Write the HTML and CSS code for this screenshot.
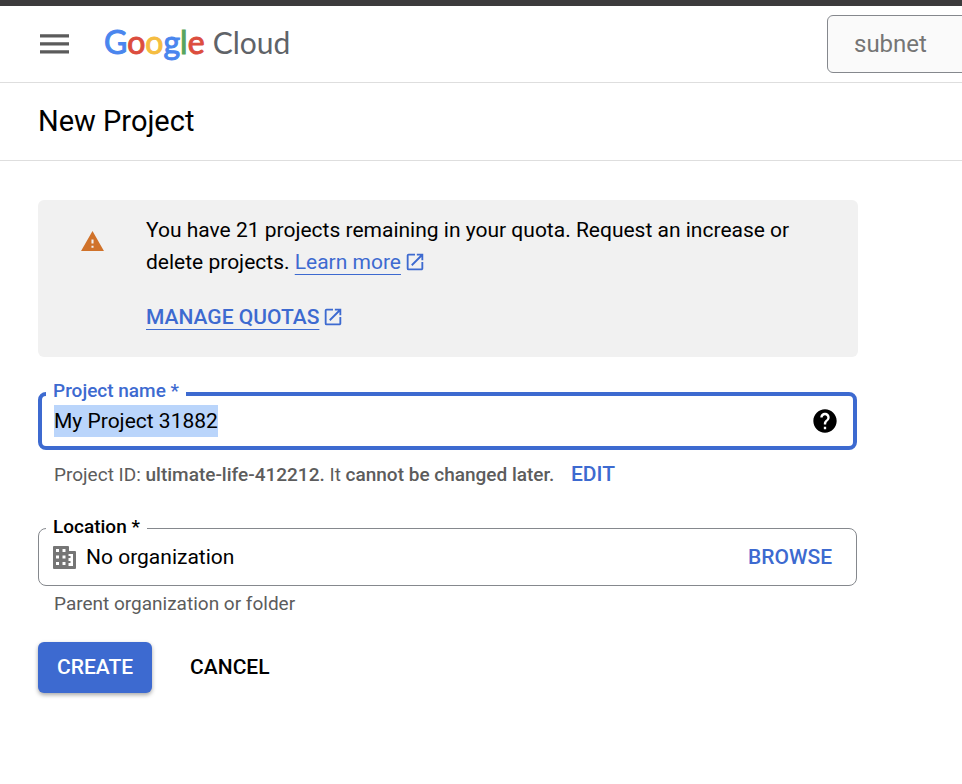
FILE: index.html
```html
<!DOCTYPE html>
<html lang="en">
<head>
<meta charset="utf-8">
<meta name="viewport" content="width=device-width, initial-scale=1">
<title>New Project</title>
<link rel="stylesheet" href="styles.css">
</head>
<body>
<header class="topbar">
  <button class="menu-button" type="button" aria-label="Menu">
    <svg width="29" height="20" viewBox="0 0 29 20" fill="#5b5b5b"><path d="M0 .2h29v3.400H0zM0 8.200h29v3.400H0zM0 16.200h29v3.400H0z"/></svg>
  </button>
  <a class="logo" href="#"><span class="logo-google"><span class="blue">G</span><span class="red">o</span><span class="yellow">o</span><span class="blue">g</span><span class="green">l</span><span class="red">e</span></span> <span class="logo-cloud">Cloud</span></a>
  <input class="search" type="search" aria-label="Search" value="subnet">
</header>
<div class="titlebar"><h1>New Project</h1></div>
<main class="content">
  <section class="notice">
    <svg class="notice-icon" width="25" height="25" viewBox="0 0 24 24" fill="#d0722a"><path d="M1 21h22L12 2 1 21zm12-3h-2v-2h2v2zm0-4h-2v-4h2v4z"/></svg>
    <div class="notice-body">
      <p>You have 21 projects remaining in your quota. Request an increase or delete projects. <a class="link" href="#"><span>Learn more</span><svg width="22" height="22" viewBox="0 0 24 24" fill="currentColor"><path d="M19 19H5V5h7V3H5a2 2 0 0 0-2 2v14a2 2 0 0 0 2 2h14c1.100 0 2-.9 2-2v-7h-2v7zM14 3v2h3.590l-9.830 9.830 1.410 1.410L19 6.410V10h2V3h-7z"/></svg></a></p>
      <p><a class="link strong" href="#"><span>MANAGE QUOTAS</span><svg width="22" height="22" viewBox="0 0 24 24" fill="currentColor"><path d="M19 19H5V5h7V3H5a2 2 0 0 0-2 2v14a2 2 0 0 0 2 2h14c1.100 0 2-.9 2-2v-7h-2v7zM14 3v2h3.590l-9.830 9.830 1.410 1.410L19 6.410V10h2V3h-7z"/></svg></a></p>
    </div>
  </section>
  <form>
    <fieldset class="field active">
      <legend><label for="name">Project name *</label></legend>
      <div class="field-row">
        <input id="name" type="text" value="My Project 31882" autocomplete="off" spellcheck="false" autofocus>
        <button class="help" type="button" aria-label="Help">
          <svg width="28" height="28" viewBox="0 0 24 24"><path d="M12 2C6.480 2 2 6.480 2 12s4.480 10 10 10 10-4.480 10-10S17.520 2 12 2zm1 17h-2v-2h2v2zm2.070-7.750l-.9.920C13.450 12.900 13 13.500 13 15h-2v-.5c0-1.100.45-2.100 1.170-2.830l1.240-1.260c.37-.36.590-.86.590-1.410 0-1.100-.9-2-2-2s-2 .9-2 2H8c0-2.210 1.790-4 4-4s4 1.790 4 4c0 .88-.36 1.680-.93 2.250z"/></svg>
        </button>
      </div>
    </fieldset>
    <p class="hint id-hint">Project ID: <b>ultimate-life-412212.</b> It <b>cannot be changed later.</b> <button class="text-button edit" type="button">EDIT</button></p>
    <fieldset class="field location">
      <legend><label for="location">Location *</label></legend>
      <div class="field-row">
        <svg class="org-icon" width="23" height="23" viewBox="0 0 23 23" fill="#757575"><path fill-rule="evenodd" d="M1 0h14a1 1 0 0 1 1 1v4h6a1 1 0 0 1 1 1v16a1 1 0 0 1-1 1H1a1 1 0 0 1-1-1V1a1 1 0 0 1 1-1zM3 3v3h3V3zM9.500 3v3h3V3zM3 9.500v3h3v-3zM9.500 9.500v3h3v-3zM3 16v3h3v-3zM9.500 16v3h3v-3zM15.500 8v2h2v2h-2v3h2v2h-2v3H20V8z"/></svg>
        <input id="location" type="text" value="No organization" readonly>
        <button class="text-button" type="button">BROWSE</button>
      </div>
    </fieldset>
    <p class="hint">Parent organization or folder</p>
    <div class="actions">
      <button class="create" type="submit">CREATE</button>
      <button class="cancel" type="button">CANCEL</button>
    </div>
  </form>
</main>
<script src="script.js"></script>
</body>
</html>
```
FILE: styles.css
```css
* { box-sizing: border-box; }
body {
  margin: 0;
  border-top: 6px solid #3c3b3c;
  background: #fff;
  color: #000;
  font: 21px/32px Roboto, "Liberation Sans", sans-serif;
}
p, h1, fieldset { margin: 0; }
button, input { font: inherit; color: inherit; }
button { border: 0; padding: 0; background: none; cursor: pointer; }
svg { display: block; }

.topbar {
  display: flex;
  align-items: center;
  height: 77px;
  padding-left: 40px;
  border-bottom: 1px solid #dedede;
  overflow: hidden;
}
.logo {
  margin-left: 35px;
  padding-bottom: 4px;
  font: 32px/40px Lato, sans-serif;
  color: #5f6368;
  text-decoration: none;
  white-space: nowrap;
}
.logo-google { -webkit-text-stroke: 1px; }
.logo-cloud { font-size: 30px; }
.blue { color: #4a86ee; }
.red { color: #dc4d3e; }
.yellow { color: #f5bd41; }
.green { color: #58a55c; }
.search {
  flex: none;
  width: 320px;
  height: 58px;
  margin-left: auto;
  margin-right: -185px;
  padding: 0 26px;
  border: 1px solid #85888d;
  border-radius: 6px;
  background: #fafafa;
  color: #757575;
  font-size: 24px;
  appearance: none;
}
.titlebar {
  padding: 18px 38px 19px;
  border-bottom: 1px solid #dedede;
}
h1 { font-size: 29px; line-height: 40px; font-weight: 400; }

.content { max-width: 896px; padding: 39px 38px; }
.notice {
  display: flex;
  gap: 41px;
  padding: 14px 42px 24px;
  border-radius: 6px;
  background: #f1f1f1;
}
.notice-icon { flex: none; margin-top: 15px; }
.notice-body { display: grid; gap: 23px; }
.link { color: #3d6ad0; text-decoration: none; white-space: nowrap; }
.link span {
  text-decoration: underline 1px;
  text-underline-offset: 5px;
  text-decoration-skip-ink: none;
}
.link svg { display: inline-block; margin-left: 3px; vertical-align: -4px; }
.strong { font-weight: 500; }

form { padding-right: 1px; }
.field {
  min-width: 0;
  padding: 1px 20px 12px 7px;
  border: 1px solid #85888d;
  border-radius: 8px;
}
legend { padding: 0 7px 3px; font-size: 19px; line-height: 20px; font-weight: 500; }
.field-row { display: flex; align-items: center; padding-left: 7px; }
.field input {
  flex: 1;
  min-width: 0;
  height: 32px;
  padding: 0;
  border: 0;
  outline: 0;
  background: none;
  line-height: 32px;
}
.field input::selection { background: #bad5fb; color: #000; }
.active {
  margin-top: 26px;
  padding: 0 14px 9px 4px;
  border: 4px solid #3d6ad0;
}
.active legend { padding-bottom: 6px; line-height: 16px; color: #3d6ad0; }
.active .field-row { padding-left: 8px; }
.org-icon { margin-right: 10px; }
.text-button { color: #3d6ad0; font-weight: 500; }
.location .text-button { margin-right: 4px; }
.hint { padding: 2px 16px; color: #5c5c5c; font-size: 19px; }
.hint b { font-weight: 500; }
.id-hint { padding: 8px 16px 26px; }
.edit { margin-left: 12px; font-size: 21px; }
.actions { display: flex; gap: 19px; margin-top: 20px; }
.create, .cancel { padding: 0 19px; line-height: 51px; font-weight: 500; border-radius: 6px; }
.create {
  background: #3d6ad0;
  color: #fff;
  box-shadow: 0 2px 4px rgba(0, 0, 0, 0.35);
}
```
FILE: script.js
```js
const nameInput = document.getElementById("name");
nameInput.focus();
nameInput.select();
```
